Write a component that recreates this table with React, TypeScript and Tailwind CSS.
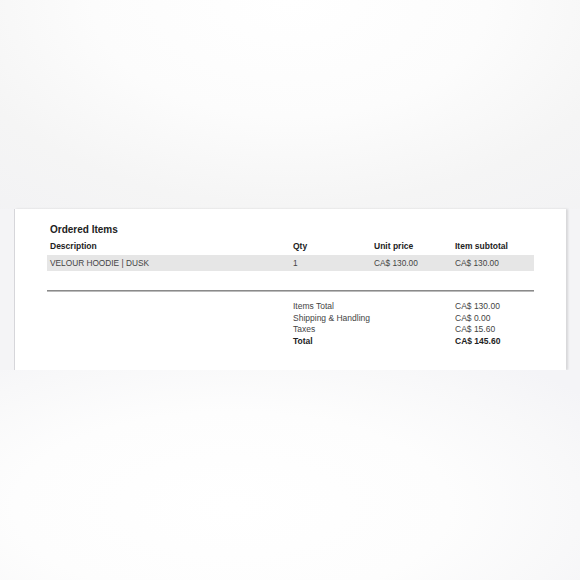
export default function App() {
  const cols = "grid grid-cols-[243px_81px_81px_81px]";
  return (
    <div className="w-[580px] h-[580px] flex flex-col bg-[#f4f4f6] font-['Liberation_Sans',Arial,sans-serif] text-[#333]">
      <div className="h-[209px] bg-[radial-gradient(ellipse_85%_140%_at_50%_0%,#ffffff_0%,#fcfcfc_40%,#f5f5f5_70%,#f2f2f4_100%)]" />
      <div className="h-[161px] mx-[14px] bg-white border-l border-[#d6d6da] shadow-[2px_0_2px_rgba(0,0,0,0.12)] pl-[32px] pr-[32px] pt-[15px]">
        <div className="text-[10px] font-bold text-[#222] leading-[12px] pl-[3px]">Ordered Items</div>
        <div className={`${cols} mt-[5px] text-[8.5px] font-bold text-[#222] leading-[11px]`}>
          <div className="pl-[3px]">Description</div>
          <div className="pl-[3px]">Qty</div>
          <div className="pl-[3px]">Unit price</div>
          <div className="pl-[3px]">Item subtotal</div>
        </div>
        <div className={`${cols} mt-[3px] h-[16px] items-center bg-[#e6e6e6] text-[8.3px] text-[#444]`}>
          <div className="pl-[3px]">VELOUR HOODIE | DUSK</div>
          <div className="pl-[3px]">1</div>
          <div className="pl-[3px]">CA$ 130.00</div>
          <div className="pl-[3px]">CA$ 130.00</div>
        </div>
        <div className="mt-[19px] h-[2px] bg-[#8a8a8a] border-b border-[#bbb]" />
        <div className={`${cols} mt-[9px] text-[8.5px] leading-[11.5px] text-[#444]`}>
          <div />
          <div className="col-span-2 pl-[3px]">
            <div>Items Total</div>
            <div>Shipping &amp; Handling</div>
            <div>Taxes</div>
            <div className="font-bold text-[#222]">Total</div>
          </div>
          <div className="pl-[3px]">
            <div>CA$ 130.00</div>
            <div>CA$ 0.00</div>
            <div>CA$ 15.60</div>
            <div className="font-bold text-[#222]">CA$ 145.60</div>
          </div>
        </div>
      </div>
      <div className="flex-1 bg-[radial-gradient(ellipse_75%_90%_at_40%_65%,#ffffff_0%,#fdfdfd_50%,#f8f8f9_80%,#f4f4f7_100%)]" />
    </div>
  );
}
